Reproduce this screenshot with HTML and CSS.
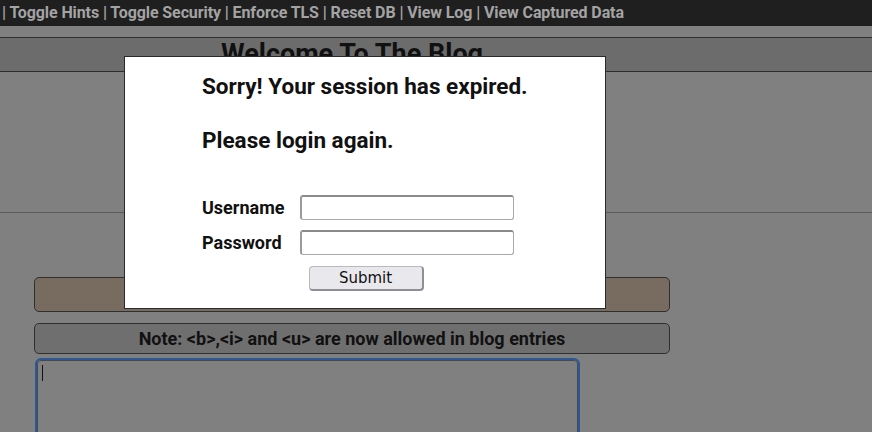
FILE: index.html
```html
<!DOCTYPE html>
<html lang="en">
<head>
<meta charset="utf-8">
<title>Welcome To The Blog</title>
<link rel="stylesheet" href="styles.css">
</head>
<body>
<nav class="nav">| Toggle Hints | Toggle Security | Enforce TLS | Reset DB | View Log | View Captured Data</nav>
<header class="band">
  <div class="wrap"><h1 class="title">Welcome To The Blog</h1></div>
</header>
<hr class="rule">
<main class="wrap content">
  <div class="box box-brown"></div>
  <div class="box box-note">Note: &lt;b&gt;,&lt;i&gt; and &lt;u&gt; are now allowed in blog entries</div>
  <div class="editor">
    <textarea class="entry"></textarea>
    <span class="caret"></span>
  </div>
</main>
<div class="modal">
  <p class="msg">Sorry! Your session has expired.</p>
  <p class="msg msg-second">Please login again.</p>
  <form class="login">
    <label class="lbl" for="u">Username</label>
    <input class="field" id="u" type="text">
    <label class="lbl" for="p">Password</label>
    <input class="field" id="p" type="password">
    <button class="submit" type="button">Submit</button>
  </form>
</div>
</body>
</html>
```
FILE: styles.css
```css
html, body {
  margin: 0;
  padding: 0;
}
body {
  background: #808080;
  font-family: Roboto, "Liberation Sans", sans-serif;
  color: #111;
  width: 872px;
  height: 432px;
  overflow: hidden;
  position: relative;
}
.nav {
  height: 26px;
  line-height: 26px;
  background: #1f1f1f;
  color: #a3a3a3;
  font-weight: 700;
  font-size: 16px;
  letter-spacing: -0.1px;
  padding-left: 2px;
  white-space: nowrap;
}
.band {
  margin-top: 11px;
  border-top: 1px solid #2e2e2e;
  border-bottom: 1px solid #2e2e2e;
  background: #6c6c6c;
  height: 33px;
  box-sizing: content-box;
}
.wrap {
  width: 704px;
}
.title {
  margin: 0;
  padding-top: 2px;
  text-align: center;
  font-size: 27px;
  font-weight: 700;
  line-height: 29px;
  color: #111;
  white-space: nowrap;
}
.rule {
  margin: 140px 0 0;
  border: 0;
  height: 1px;
  background: #5a5a5a;
}
.content {
  padding: 0 34px;
  box-sizing: border-box;
}
.box {
  border: 1px solid #2f2f2f;
  border-radius: 5px;
  box-sizing: border-box;
}
.box-brown {
  margin-top: 64px;
  height: 35px;
  background: #786b5f;
}
.box-note {
  margin-top: 11px;
  height: 31px;
  background: #6f6f6f;
  text-align: center;
  font-size: 18px;
  font-weight: 700;
  line-height: 29px;
  color: #111;
  white-space: nowrap;
}
.editor {
  position: relative;
  margin-top: 6px;
  margin-left: 3px;
  width: 541px;
}
.entry {
  display: block;
  width: 541px;
  height: 120px;
  box-sizing: border-box;
  margin: 0;
  border: 1px solid #4a4a4a;
  border-radius: 4px;
  outline: 2px solid #2b5797;
  outline-offset: 0;
  background: #808080;
  resize: none;
}
.caret {
  position: absolute;
  left: 5px;
  top: 5px;
  width: 1px;
  height: 16px;
  background: #111;
}
.modal {
  position: absolute;
  left: 124px;
  top: 56px;
  width: 482px;
  height: 253px;
  box-sizing: border-box;
  background: #fff;
  border: 1px solid #2a2a2a;
  padding: 16px 0 0 77px;
}
.msg {
  margin: 0;
  font-size: 22.5px;
  font-weight: 700;
  line-height: 27px;
  color: #111;
  white-space: nowrap;
}
.msg-second {
  margin-top: 27px;
}
.login {
  margin-top: 41px;
  display: grid;
  grid-template-columns: 82px 214px;
  column-gap: 16px;
  row-gap: 10px;
  align-items: center;
  width: 312px;
}
.lbl {
  font-size: 18px;
  font-weight: 700;
  color: #111;
  white-space: nowrap;
}
.field {
  width: 214px;
  height: 25px;
  box-sizing: border-box;
  margin: 0;
  border: 1px solid #a8a8a8;
  border-top: 2px solid #8a8a8a;
  border-left: 2px solid #9a9a9a;
  border-radius: 3px;
  background: #fff;
}
.submit {
  grid-column: 1 / 3;
  justify-self: center;
  margin-left: 16px;
  margin-top: 1px;
  width: 115px;
  height: 25px;
  box-sizing: border-box;
  border: 1px solid #b8b8bd;
  border-right: 2px solid #8f8f96;
  border-bottom: 2px solid #8f8f96;
  border-radius: 4px;
  background: #e9e9ed;
  font-family: "DejaVu Sans", sans-serif;
  font-size: 15px;
  color: #111;
  padding: 0;
}
```
